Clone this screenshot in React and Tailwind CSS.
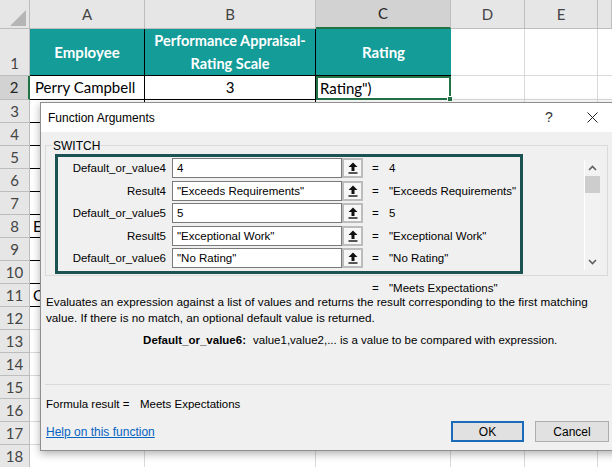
import React from 'react';

const SHEET_FONT = { fontFamily: 'Lato, "Noto Sans", sans-serif' };
const UI_FONT = { fontFamily: '"Liberation Sans", Arial, sans-serif' };

const COL_W = ['w-[30px]', 'w-[115px]', 'w-[171px]', 'w-[135px]', 'w-[74px]', 'w-[73px]', 'w-[14px]'];
const GRID = 'border-r border-b border-[#d9d9d9]';
const BLACK = 'border-r border-b border-black';

const ARGS = [
    { label: 'Default_or_value4', value: '4', result: '4' },
    { label: 'Result4', value: '"Exceeds Requirements"', result: '"Exceeds Requirements"' },
    { label: 'Default_or_value5', value: '5', result: '5' },
    { label: 'Result5', value: '"Exceptional Work"', result: '"Exceptional Work"' },
    { label: 'Default_or_value6', value: '"No Rating"', result: '"No Rating"' },
];

// only the first letter of these cells peeks out from behind the dialog
const LOWER_TEXT = { 8: 'E', 11: 'C' };

function RefArrow() {
    return (
        <svg width="10" height="12" viewBox="0 0 10 12">
            <path d="M5 0.5 L9.5 5 H6.5 V9 H3.5 V5 H0.5 Z" fill="#111" />
            <rect x="0.5" y="10.3" width="9" height="1.4" fill="#111" />
        </svg>
    );
}

function Sheet() {
    return (
        <div className="flex flex-col text-[15px] text-black" style={SHEET_FONT}>
            {/* column letters */}
            <div className="flex h-[29px]">
                <div className={`${COL_W[0]} bg-[#e6e6e6] border-r border-b border-[#bdbdbd] relative`}>
                    <svg className="absolute left-[10px] top-[10px]" width="16" height="16" viewBox="0 0 16 16">
                        <path d="M16 0 V16 H0 Z" fill="#b5b5b5" />
                    </svg>
                </div>
                {['A', 'B', 'C', 'D', 'E', ''].map((c, i) => (
                    <div
                        key={i}
                        className={`${COL_W[i + 1]} flex items-center justify-center border-r ${c === 'C' ? 'bg-[#d2d2d2] border-b-2 border-b-[#217346] border-r-[#bdbdbd] text-[#262626]' : 'bg-[#e6e6e6] border-b border-[#bdbdbd] text-[#444]'}`}
                    >{c}</div>
                ))}
            </div>

            {/* row 1 header */}
            <div className="flex h-[47px]">
                <div className={`${COL_W[0]} bg-[#e6e6e6] border-r border-b border-[#bdbdbd] text-[#444] flex items-end justify-center pb-[1px]`}>1</div>
                <div className={`${COL_W[1]} bg-[#139c98] ${BLACK} text-white font-bold flex items-center justify-center`}>Employee</div>
                <div className={`${COL_W[2]} bg-[#139c98] ${BLACK} text-white font-bold flex items-center justify-center text-center leading-[23px] text-[14.5px] whitespace-nowrap`}>
                    Performance Appraisal-<br />Rating Scale
                </div>
                <div className={`${COL_W[3]} bg-[#139c98] border-b border-black text-white font-bold flex items-center justify-center`}>Rating</div>
                <div className={`${COL_W[4]} ${GRID}`} />
                <div className={`${COL_W[5]} ${GRID}`} />
                <div className={`${COL_W[6]} border-b border-[#d9d9d9]`} />
            </div>

            {/* row 2 */}
            <div className="flex h-[24px]">
                <div className={`${COL_W[0]} bg-[#d2d2d2] border-r-2 border-r-[#217346] border-b border-[#bdbdbd] text-[#262626] flex items-center justify-center`}>2</div>
                <div className={`${COL_W[1]} ${BLACK} flex items-center pl-[5px] whitespace-nowrap`}>Perry Campbell</div>
                <div className={`${COL_W[2]} ${BLACK} flex items-center justify-center`}>3</div>
                <div className={`${COL_W[3]} border-2 border-[#217346] flex items-center pl-[2px] relative`}>
                    Rating")
                    <span className="absolute right-[-4px] bottom-[-4px] w-[6px] h-[6px] bg-[#217346] border border-white" />
                </div>
                <div className={`${COL_W[4]} ${GRID}`} />
                <div className={`${COL_W[5]} ${GRID}`} />
                <div className={`${COL_W[6]} border-b border-[#d9d9d9]`} />
            </div>

            {/* rows 3..18 */}
            {Array.from({ length: 16 }, (_, k) => k + 3).map(r => (
                <div key={r} className="flex h-[23px]">
                    <div className={`${COL_W[0]} bg-[#e6e6e6] border-r border-b border-[#bdbdbd] text-[#444] flex items-center justify-center`}>{r}</div>
                    <div className={`${COL_W[1]} ${r <= 11 ? BLACK : GRID} flex items-center pl-[3px] whitespace-nowrap overflow-hidden`}>{LOWER_TEXT[r] || ''}</div>
                    <div className={`${COL_W[2]} ${r <= 11 ? BLACK : GRID}`} />
                    <div className={`${COL_W[3]} ${r <= 11 ? BLACK : GRID}`} />
                    <div className={`${COL_W[4]} ${GRID}`} />
                    <div className={`${COL_W[5]} ${GRID}`} />
                    <div className={`${COL_W[6]} border-b border-[#d9d9d9]`} />
                </div>
            ))}
        </div>
    );
}

function Dialog() {
    return (
        <div
            className="absolute left-[40px] top-[102px] w-[582px] h-[349px] border border-[#8f8f8f] flex flex-col shadow-[0_3px_8px_rgba(0,0,0,0.3)] text-[11.5px] text-black"
            style={UI_FONT}
        >
            {/* title bar */}
            <div className="h-[29px] bg-white flex items-center pl-[7px] pr-[19px] text-[12px]">
                <span>Function Arguments</span>
                <span className="ml-auto w-[20px] text-center text-[14px] text-[#333]">?</span>
                <span className="ml-[23px] w-[20px] flex justify-center">
                    <svg width="11" height="11" viewBox="0 0 11 11">
                        <path d="M0.5 0.5 L10.5 10.5 M10.5 0.5 L0.5 10.5" stroke="#222" strokeWidth="1" />
                    </svg>
                </span>
            </div>

            <div className="flex-1 bg-[#f0f0f0] flex flex-col">
                {/* SWITCH group */}
                <div className="mt-[13px] ml-[4px] w-[563px] h-[131px] border border-[#dadada] relative">
                    <span className="absolute left-[6px] top-[-8px] bg-[#f0f0f0] px-[1px] leading-[16px] text-[12px]">SWITCH</span>
                    <div className="flex items-start pt-[8px] pl-[9px]">
                        <div className="w-[468px] h-[120px] border-[3px] border-[#1c5252] pt-[1px] flex flex-col">
                            {ARGS.map(a => (
                                <div key={a.label} className="h-[23px] flex items-start">
                                    <span className="w-[108px] text-right leading-[20px] whitespace-nowrap">{a.label}</span>
                                    <div className="ml-[6px] w-[170px] h-[20px] border border-[#7a7a7a] bg-white pl-[4px] leading-[18px] whitespace-nowrap overflow-hidden">{a.value}</div>
                                    <div className="w-[21px] h-[20px] border-2 border-[#bcbcbc] bg-[#f7f7f7] flex items-center justify-center">
                                        <RefArrow />
                                    </div>
                                    <span className="ml-[9px] w-[17px] leading-[20px]">=</span>
                                    <span className="leading-[20px] whitespace-nowrap">{a.result}</span>
                                </div>
                            ))}
                        </div>
                        <div className="ml-auto mr-[7px] mt-[6px] w-[16px] h-[110px] bg-[#f2f2f2] border-l border-white flex flex-col items-center">
                            <svg className="mt-[5px]" width="9" height="6" viewBox="0 0 9 6">
                                <path d="M1 5 L4.5 1.5 L8 5" stroke="#606060" strokeWidth="1.6" fill="none" />
                            </svg>
                            <div className="mt-[5px] w-[15px] h-[17px] bg-[#cdcdcd]" />
                            <svg className="mt-auto mb-[5px]" width="9" height="6" viewBox="0 0 9 6">
                                <path d="M1 1 L4.5 4.5 L8 1" stroke="#606060" strokeWidth="1.6" fill="none" />
                            </svg>
                        </div>
                    </div>
                </div>

                {/* overall result */}
                <div className="mt-[5px] h-[14px] leading-[14px] flex pl-[331px] whitespace-nowrap">
                    <span className="w-[17px]">=</span>
                    <span>"Meets Expectations"</span>
                </div>

                {/* description */}
                <p className="mt-[-1px] pl-[5px] leading-[16px] text-[11.7px] whitespace-nowrap">
                    Evaluates an expression against a list of values and returns the result corresponding to the first matching
                    <br />
                    value. If there is no match, an optional default value is returned.
                </p>

                <div className="mt-[6px] flex leading-[16px] whitespace-nowrap">
                    <span className="w-[205px] text-right font-bold">Default_or_value6:</span>
                    <span className="ml-[7px]">value1,value2,... is a value to be compared with expression.</span>
                </div>

                <div className="mt-[36px] ml-[4px] w-[565px] h-px bg-[#dadada]" />

                <div className="mt-[11px] pl-[5px] flex leading-[16px]">
                    <span className="w-[94px]">Formula result =</span>
                    <span>Meets Expectations</span>
                </div>

                <div className="mt-[9px] pl-[5px] w-[568px] h-[21px] flex items-center">
                    <span className="text-[#0563c1] underline text-[12px]">Help on this function</span>
                    <div className="ml-auto w-[73px] h-[21px] border-2 border-[#1a6bb8] bg-[#e1e1e1] flex items-center justify-center text-[12px]">OK</div>
                    <div className="ml-[11px] w-[74px] h-[21px] border border-[#adadad] bg-[#e1e1e1] flex items-center justify-center text-[12px]">Cancel</div>
                </div>
            </div>
        </div>
    );
}

export default function App() {
    return (
        <div className="relative w-[612px] h-[467px] overflow-hidden bg-white">
            <Sheet />
            <Dialog />
        </div>
    );
}
